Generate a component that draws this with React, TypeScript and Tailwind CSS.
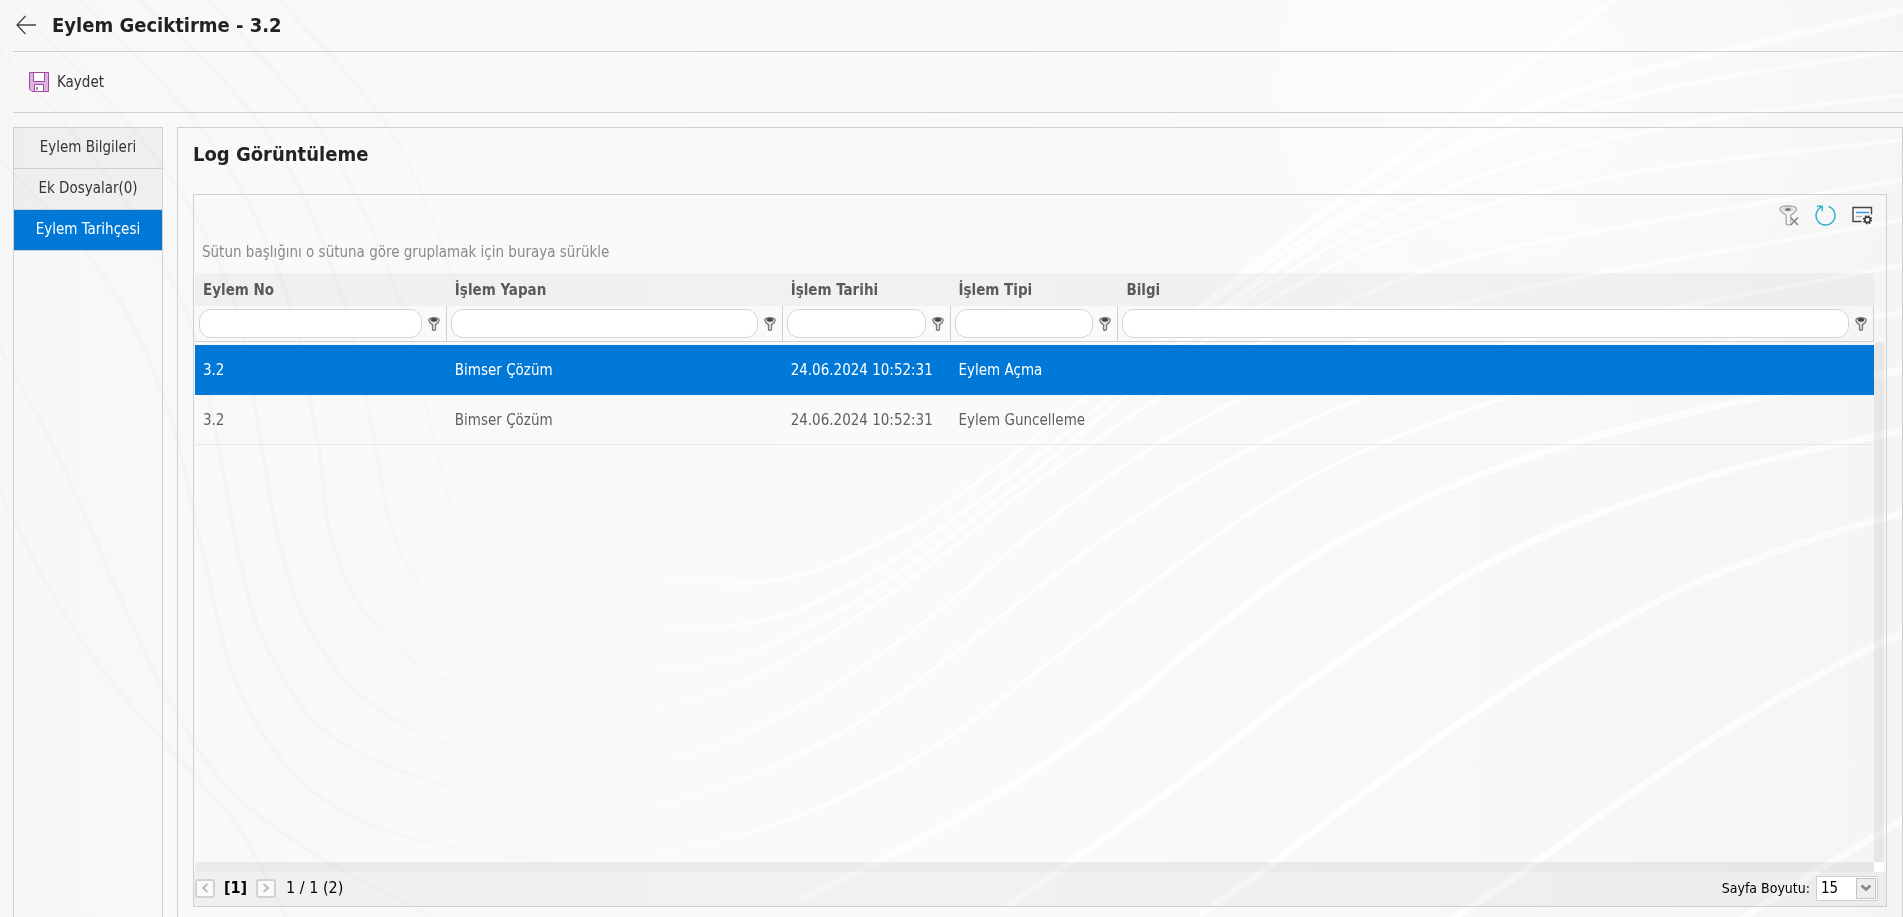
type Point = [number, number];

interface LogRow {
  no: string;
  user: string;
  date: string;
  type: string;
  info: string;
}

const tabs = ['Eylem Bilgileri', 'Ek Dosyalar(0)', 'Eylem Tarihçesi'];
const activeTab = 'Eylem Tarihçesi';

const columns = [
  { title: 'Eylem No', width: 'w-[15%]' },
  { title: 'İşlem Yapan', width: 'w-[20%]' },
  { title: 'İşlem Tarihi', width: 'w-[10%]' },
  { title: 'İşlem Tipi', width: 'w-[10%]' },
  { title: 'Bilgi', width: 'w-[45%]' },
];

const rows: LogRow[] = [
  { no: '3.2', user: 'Bimser Çözüm', date: '24.06.2024 10:52:31', type: 'Eylem Açma', info: '' },
  { no: '3.2', user: 'Bimser Çözüm', date: '24.06.2024 10:52:31', type: 'Eylem Guncelleme', info: '' },
];

// Wave lines of the page background: grey on the left, white on the right
const waves: Point[][] = [
  [[-10, 150], [100, 270], [165, 400], [200, 540], [234, 677], [288, 767], [370, 825], [505, 856], [614, 857], [722, 840], [830, 803], [939, 744], [1030, 677], [1141, 592], [1253, 511], [1370, 448], [1531, 390], [1698, 347], [1903, 312]],
  [[-10, 40], [110, 180], [185, 310], [218, 444], [240, 561], [268, 650], [330, 735], [451, 787], [592, 811], [680, 800], [760, 772], [857, 724], [939, 665], [1030, 594], [1120, 527], [1235, 457], [1364, 397], [1531, 338], [1903, 265]],
  [[-10, -20], [150, 150], [230, 290], [261, 444], [278, 537], [305, 620], [355, 690], [430, 737], [527, 762], [603, 768], [680, 757], [760, 727], [850, 675], [939, 611], [1030, 535], [1141, 455], [1269, 385], [1475, 300], [1903, 220]],
  [[60, -20], [210, 140], [285, 290], [318, 444], [329, 527], [355, 597], [400, 650], [460, 686], [540, 707], [630, 710], [722, 690], [820, 640], [930, 565], [1030, 487], [1180, 385], [1330, 310], [1500, 250], [1903, 180]],
  [[120, -20], [265, 130], [340, 290], [375, 444], [391, 527], [420, 585], [475, 635], [560, 664], [657, 669], [744, 655], [840, 610], [939, 545], [1030, 475], [1190, 350], [1400, 235], [1620, 175], [1903, 140]],
  [[190, -20], [320, 130], [400, 300], [435, 444], [460, 520], [520, 580], [610, 618], [700, 627], [787, 614], [885, 565], [1000, 485], [1200, 330], [1420, 200], [1650, 130], [1903, 95]],
  [[260, -20], [390, 130], [460, 300], [502, 444], [540, 510], [600, 555], [680, 580], [776, 580], [870, 548], [980, 480], [1200, 310], [1440, 160], [1660, 90], [1903, 50]],
  [[-10, 330], [60, 460], [130, 620], [180, 720], [230, 790], [300, 845], [370, 885], [450, 925]],
  [[-10, 470], [50, 590], [110, 680], [180, 760], [240, 830], [290, 925]],
  [[1000, 910], [1085, 852], [1180, 783], [1275, 708], [1370, 639], [1470, 573], [1580, 521], [1730, 470], [1903, 430]],
  [[800, 900], [910, 845], [1020, 780], [1114, 714], [1205, 637], [1308, 560], [1420, 500], [1550, 450], [1710, 408], [1903, 370]],
  [[1200, 915], [1269, 866], [1364, 793], [1475, 712], [1587, 640], [1698, 582], [1810, 540], [1903, 513]],
  [[1450, 920], [1531, 866], [1615, 805], [1726, 730], [1837, 665], [1903, 633]],
  [[1740, 920], [1810, 875], [1903, 820]],
  [[1100, 390], [1300, 230], [1480, 100], [1640, -20]],
  [[1150, 365], [1330, 230], [1550, 100], [1903, 10]],
];

// Catmull-Rom spline written out as cubic segments
function toPath(points: Point[]) {
  let d = `M${points[0][0]} ${points[0][1]}`;
  for (let i = 0; i < points.length - 1; i++) {
    const p0 = points[i - 1] || points[i];
    const p1 = points[i];
    const p2 = points[i + 1];
    const p3 = points[i + 2] || p2;
    d += `C${p1[0] + (p2[0] - p0[0]) / 6} ${p1[1] + (p2[1] - p0[1]) / 6} ${p2[0] - (p3[0] - p1[0]) / 6} ${p2[1] - (p3[1] - p1[1]) / 6} ${p2[0]} ${p2[1]}`;
  }
  return d;
}

function WaveBackground() {
  return (
    <svg
      aria-hidden="true"
      className="fixed inset-0 -z-10 h-full w-full"
      viewBox="0 0 1903 917"
      preserveAspectRatio="xMidYMid slice"
      fill="none"
    >
      <defs>
        <linearGradient id="base" x1="0" y1="0" x2="1903" y2="0" gradientUnits="userSpaceOnUse">
          <stop offset="0" stopColor="#f7f7f7" />
          <stop offset="0.12" stopColor="#f9f9f9" />
          <stop offset="0.5" stopColor="#fafafa" />
          <stop offset="0.75" stopColor="#f8f8f8" />
          <stop offset="1" stopColor="#f5f5f5" />
        </linearGradient>
        <linearGradient id="line" x1="0" y1="0" x2="1903" y2="0" gradientUnits="userSpaceOnUse">
          <stop offset="0" stopColor="#f4f4f4" />
          <stop offset="0.17" stopColor="#f5f5f5" />
          <stop offset="0.33" stopColor="#fafafa" />
          <stop offset="0.45" stopColor="#fefefe" />
          <stop offset="0.8" stopColor="#fefefe" />
          <stop offset="1" stopColor="#fbfbfb" />
        </linearGradient>
        <radialGradient id="glow" cx="1520" cy="90" r="420" gradientUnits="userSpaceOnUse">
          <stop offset="0" stopColor="#fff" stopOpacity="0.6" />
          <stop offset="1" stopColor="#fff" stopOpacity="0" />
        </radialGradient>
      </defs>
      <rect width="1903" height="917" fill="url(#base)" />
      <rect width="1903" height="917" fill="url(#glow)" />
      {waves.map((points, i) => (
        <path key={i} d={toPath(points)} stroke="url(#line)" strokeWidth={i < 9 ? 4 : 7} />
      ))}
    </svg>
  );
}

function BackIcon() {
  return (
    <svg width="20" height="20" viewBox="0 0 20 20" fill="none" stroke="#444" strokeWidth="1.3">
      <path d="M9.5 1L1 10l8.5 9M1 10h19" />
    </svg>
  );
}

function SaveIcon() {
  return (
    <svg width="20" height="20" viewBox="0 0 20 20" fill="none" stroke="#a349a4">
      <path d="M.5.5h19v19H3L.5 17z" fill="#ddb4dd" />
      <path d="M4.5.5h11v9h-11z" fill="#fff" />
      <path d="M5.5 19.500v-7h9v7z" fill="#fff" />
      <path d="M7 15h2v3H7z" fill="#999" stroke="none" />
    </svg>
  );
}

function FilterIcon() {
  return (
    <svg width="12" height="14" viewBox="0 0 12 14">
      <path
        d="M.8 3.2C.8 1.5 3 .7 6 .7s5.200.8 5.200 2.500c0 2-2 3.300-3.700 4.600v4.700c0 1-3 1-3 0V7.800C2.800 6.500.8 5.200.8 3.200z"
        fill="#e0e0e0"
        stroke="#777"
        strokeWidth="1.3"
      />
      <ellipse cx="6" cy="2.800" rx="3.300" ry="1.900" fill="#444" />
    </svg>
  );
}

function ClearFilterIcon() {
  return (
    <svg width="20" height="21" viewBox="0 0 20 21" fill="none">
      <path
        d="M1 4C1 2 4.5 1 9 1s8.5 1 8.5 3c0 2.500-3 4.300-5.700 6.200V19c0 1.200-4.600 1.200-4.600 0v-8.800C4.500 8.300 1 6.500 1 4z"
        fill="#f4f4f4"
        stroke="#aaa"
        strokeWidth="1.4"
      />
      <ellipse cx="9" cy="4.300" rx="5.500" ry="2.300" fill="#d5d5d5" />
      <ellipse cx="9" cy="4.600" rx="2.700" ry="1.500" fill="#777" />
      <path d="M12 12.500l7 7M19 12.500l-7 7" stroke="#f6f6f6" strokeWidth="3.500" />
      <path d="M11.500 12.500l7.500 7.500M19 12.500l-7.500 7.500" stroke="#858585" strokeWidth="1.700" />
    </svg>
  );
}

function RefreshIcon() {
  return (
    <svg width="21" height="21" viewBox="0 0 21 21" fill="none" stroke="#27b1cc" strokeWidth="1.400">
      <path d="M13.500 1.500a9.500 9.500 0 1 1-6.700.300" />
      <path d="M2 1.300h5.200v5" />
    </svg>
  );
}

function SettingsIcon() {
  return (
    <svg width="21" height="19" viewBox="0 0 21 19" fill="none">
      <path d="M9.500 15.500H1V1.500h18.500v7" stroke="#444" strokeWidth="1.400" />
      <path d="M4 6.500h13" stroke="#3a96dd" strokeWidth="1.400" />
      <path d="M4 10.500h6" stroke="#b5b5b5" strokeWidth="1.400" />
      <circle cx="15.500" cy="13.800" r="2.700" stroke="#333" strokeWidth="1.500" />
      <circle cx="15.500" cy="13.800" r="3.900" stroke="#333" strokeWidth="1.500" strokeDasharray="1.560 1.500" />
    </svg>
  );
}

function PagerButton({ label, path }: { label: string; path: string }) {
  return (
    <button
      type="button"
      aria-label={label}
      className="flex h-[19px] w-5 items-center justify-center rounded-[3px] border-2 border-[#d2d2d2] bg-[#fafafa]"
    >
      <svg width="8" height="10" viewBox="0 0 8 10" fill="none" stroke="#bcbcbc" strokeWidth="2">
        <path d={path} />
      </svg>
    </button>
  );
}

function LogTable() {
  return (
    <table className="w-full table-fixed border-separate border-spacing-0 text-left">
      <thead>
        <tr>
          {columns.map((col) => (
            <th key={col.title} className={`${col.width} h-[33px] bg-black/[0.035] px-2 font-bold text-[#5a5a5a]`}>
              {col.title}
            </th>
          ))}
        </tr>
        <tr>
          {columns.map((col) => (
            <td key={col.title} className="p-0 pb-[3px]">
              <div className="flex h-9 items-center gap-[6px] border-r border-b border-[#cfcfcf] pr-[6px] pl-1">
                <input
                  type="text"
                  aria-label={col.title}
                  className="h-[29px] min-w-0 flex-1 rounded-xl border border-[#d4d4d4] bg-white px-2 outline-none"
                />
                <button type="button" aria-label={`${col.title} filtresi`}>
                  <FilterIcon />
                </button>
              </div>
            </td>
          ))}
        </tr>
      </thead>
      <tbody>
        {rows.map((row, i) => (
          <tr key={i} className={i === 0 ? 'bg-[#0078d7] text-white' : 'text-[#5f5f5f]'}>
            {[row.no, row.user, row.date, row.type, row.info].map((value, j) => (
              <td
                key={j}
                className={`h-[50px] px-2 whitespace-nowrap ${i === 0 ? '' : 'border-b border-[#e9e9e9]'}`}
              >
                {value}
              </td>
            ))}
          </tr>
        ))}
      </tbody>
    </table>
  );
}

export default function App() {
  return (
    <div className="flex min-h-screen flex-col pl-[13px] font-['DejaVu_Sans_Condensed','DejaVu_Sans',sans-serif] text-[15px] leading-5 text-[#333]">
      <WaveBackground />

      {/* Page title */}
      <header className="flex h-[52px] items-center gap-4 border-b border-[#cfcfcf] pb-[2px] pl-[3px]">
        <button type="button" aria-label="Geri">
          <BackIcon />
        </button>
        <h1 className="text-[20px] font-bold text-[#222]">Eylem Geciktirme - 3.2</h1>
      </header>

      <div className="flex h-[61px] items-center border-b border-[#cfcfcf] pl-4">
        <button type="button" className="flex items-center gap-2">
          <SaveIcon />
          Kaydet
        </button>
      </div>

      <div className="flex flex-1 gap-[14px] pt-[14px]">
        {/* Tabs */}
        <nav className="w-[150px] shrink-0 border border-b-0 border-[#cfcfcf]">
          {tabs.map((tab) => (
            <button
              key={tab}
              type="button"
              className={`block h-[41px] w-full border-b border-[#cfcfcf] pb-[2px] ${
                tab === activeTab ? 'bg-[#0078d7] text-white' : 'bg-black/[0.035]'
              }`}
            >
              {tab}
            </button>
          ))}
        </nav>

        <main className="flex min-w-0 flex-1 flex-col border border-b-0 border-[#cfcfcf] px-[15px] pb-[10px]">
          <h2 className="pt-4 pb-[30px] text-[20px] font-bold text-[#222]">Log Görüntüleme</h2>

          <section className="flex flex-1 flex-col border border-[#cfcfcf]">
            <div className="flex h-10 items-center justify-end gap-4 pr-[13px]">
              <button type="button" aria-label="Filtreyi temizle">
                <ClearFilterIcon />
              </button>
              <button type="button" aria-label="Yenile">
                <RefreshIcon />
              </button>
              <button type="button" aria-label="Ayarlar">
                <SettingsIcon />
              </button>
            </div>
            <p className="px-2 pt-[7px] pb-[11px] text-[#8a8a8a]">
              Sütun başlığını o sütuna göre gruplamak için buraya sürükle
            </p>

            <div className="flex flex-1 pr-[2px] pl-px">
              <div className="min-w-0 flex-1">
                <LogTable />
              </div>
              <div className="flex w-[10px] pt-[69px]">
                <div className="flex-1 rounded-t-[3px] bg-black/[0.06]" />
              </div>
            </div>
            <div className="flex h-[10px] pr-[2px] pl-px">
              <div className="flex-1 rounded-l-[3px] bg-black/[0.06]" />
              <div className="w-[10px] bg-white" />
            </div>

            {/* Pager */}
            <footer className="flex h-[34px] items-center bg-black/[0.035] pr-2 pb-[2px] pl-px text-[16px] text-black">
              <PagerButton label="Önceki sayfa" path="M6.5 1L2 5l4.5 4" />
              <b className="w-[41px] text-center">[1]</b>
              <PagerButton label="Sonraki sayfa" path="M1.5 1L6 5 1.5 9" />
              <span className="pl-[10px]">1 / 1 (2)</span>
              <label htmlFor="page-size" className="ml-auto pr-[6px] text-[14px]">
                Sayfa Boyutu:
              </label>
              <div className="relative">
                <select
                  id="page-size"
                  className="block h-[25px] w-[62px] appearance-none border border-[#d0d0d0] bg-white pl-1 text-[15px]"
                >
                  <option>15</option>
                </select>
                <span className="pointer-events-none absolute top-[2px] right-[2px] flex h-[21px] w-5 items-center justify-center border border-[#c4c4c4] bg-[#eeeeee]">
                  <svg width="12" height="8" viewBox="0 0 12 8" fill="none" stroke="#888" strokeWidth="2.5">
                    <path d="M1.5 1.5L6 5.5l4.5-4" />
                  </svg>
                </span>
              </div>
            </footer>
          </section>
        </main>
      </div>
    </div>
  );
}
